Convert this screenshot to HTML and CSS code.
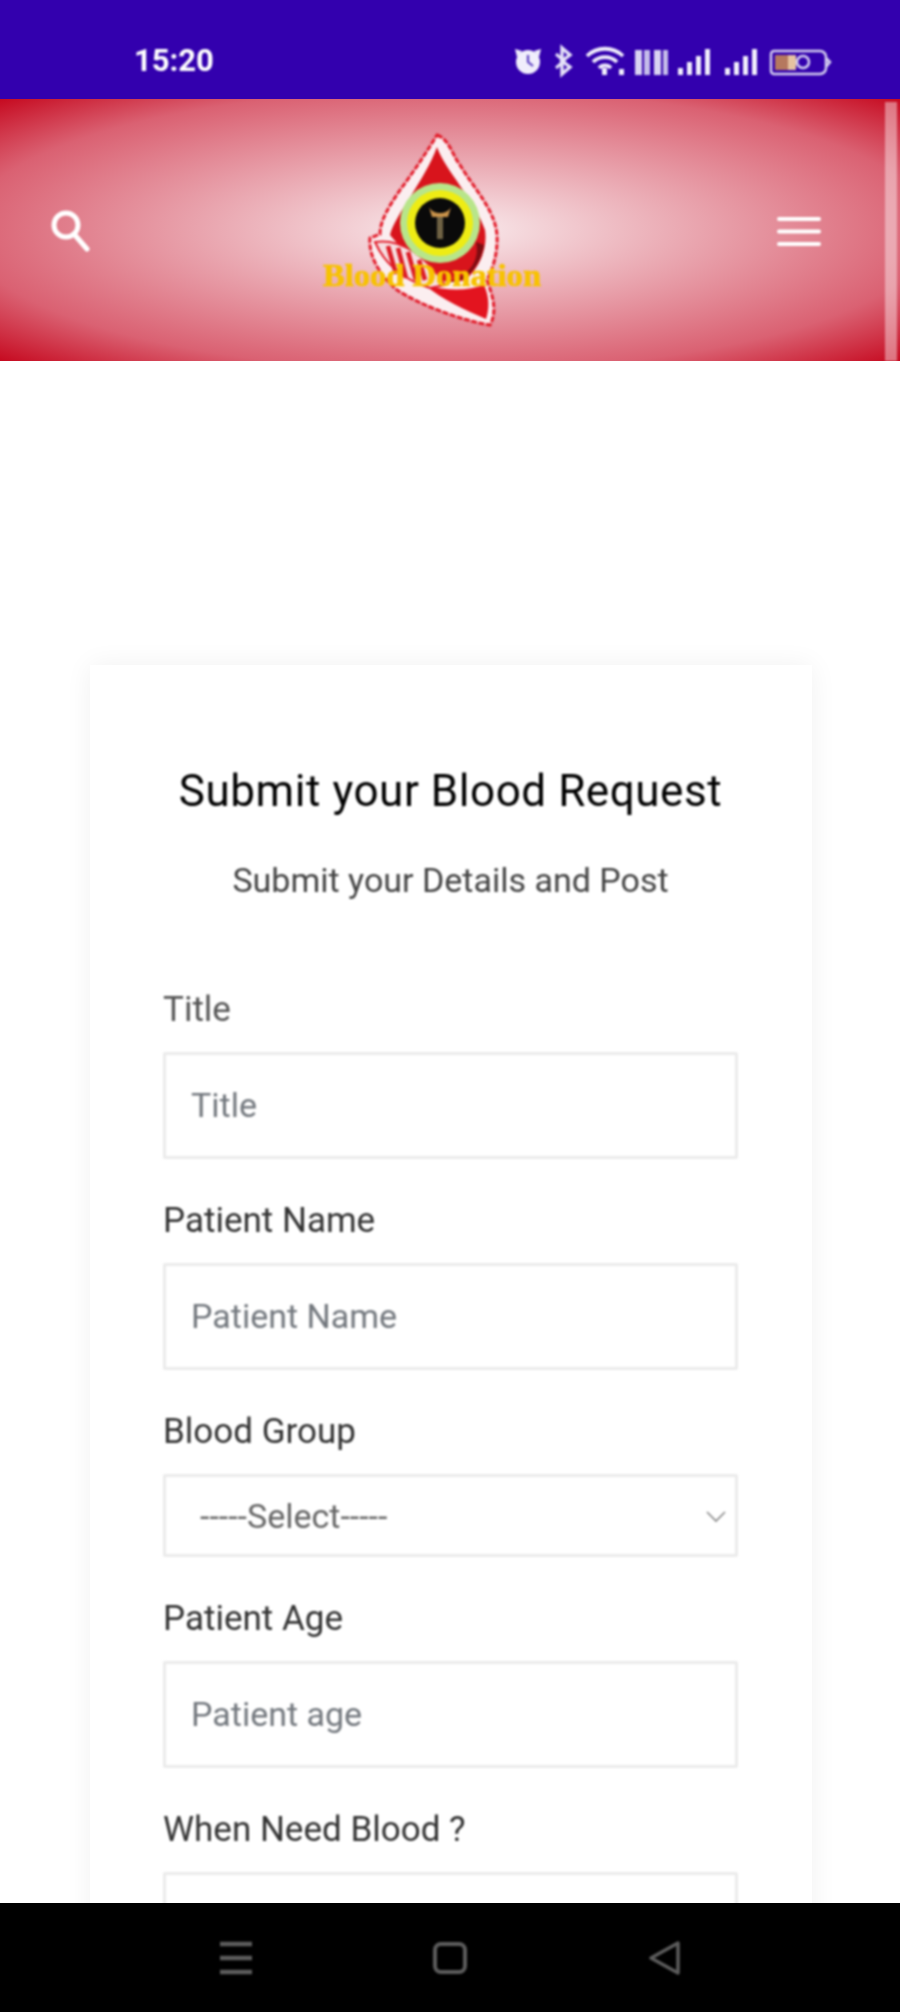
FILE: index.html
```html
<!DOCTYPE html>
<html lang="en">
<head>
<meta charset="utf-8">
<title>Blood Donation</title>
<link rel="stylesheet" href="styles.css">
</head>
<body>
<div class="phone">
  <div class="status">
    <span class="time">15:20</span>
    <svg class="status-icons" width="330" height="36" viewBox="0 0 330 36">
      <g fill="#f1eefc">
        <circle cx="25" cy="20" r="12"/><path d="M12 7l7 2-5 6zM38 7l-7 2 5 6z"/>
        <path d="M25 13v7l5 4" fill="none" stroke="#5a3fc0" stroke-width="2.2"/>
        <path d="M59 6l0 26 8-7-8-6 8-6z" fill="none" stroke="#e6e2f8" stroke-width="3.4"/>
        <path d="M53 12l8 7-8 7" fill="none" stroke="#e6e2f8" stroke-width="3"/>
        <path d="M84 14a26 26 0 0 1 36 0M90 20a17 17 0 0 1 24 0M96 26a8 8 0 0 1 12 0" fill="none" stroke="#f1eefc" stroke-width="3.8"/>
        <rect x="99" y="26" width="5" height="7"/><rect x="116" y="27" width="5" height="6"/>
        <rect x="132" y="8" width="7" height="25" fill="#d9d3f2"/><rect x="141" y="8" width="6" height="25" fill="#c4bcea"/>
        <rect x="151" y="8" width="7" height="25" fill="#d9d3f2"/><rect x="160" y="8" width="5" height="25" fill="#c4bcea"/>
        <rect x="175" y="26" width="5" height="7"/><rect x="184" y="20" width="5" height="13"/><rect x="193" y="14" width="5" height="19"/><rect x="202" y="7" width="5" height="26"/>
        <rect x="222" y="26" width="5" height="7"/><rect x="231" y="20" width="5" height="13"/><rect x="240" y="14" width="5" height="19"/><rect x="249" y="7" width="5" height="26"/>
      </g>
      <path d="M271 9h46a6 6 0 0 1 6 6v11a6 6 0 0 1-6 6h-46a3 3 0 0 1-3-3v-17a3 3 0 0 1 3-3zM323 16l4 4-4 5" fill="none" stroke="#d5cff0" stroke-width="2.5"/>
      <rect x="272" y="13" width="13" height="15" fill="#b5785f"/>
      <rect x="285" y="13" width="8" height="15" fill="#e6c3a0"/>
      <circle cx="300" cy="20" r="6" fill="none" stroke="#d5cff0" stroke-width="2.5"/>
    </svg>
  </div>
  <header class="topbar">
    <svg class="search" width="46" height="46" viewBox="0 0 46 46">
      <circle cx="18" cy="17" r="12" fill="none" stroke="#fff" stroke-width="5"/>
      <path d="M26 26l13 15" stroke="#fff" stroke-width="5" stroke-linecap="round"/>
    </svg>
    <svg class="logo" width="260" height="220" viewBox="0 0 260 220">
      <path d="M137 15C150 20 152 35 160 45C175 70 195 90 197 115C198 135 192 150 187 160C192 175 198 190 190 205C160 200 120 185 97 170C85 160 68 140 70 118L80 114C80 100 90 85 100 70C115 50 128 30 137 15Z" fill="#fbeef0" stroke="#e21d2b" stroke-width="3" stroke-dasharray="6 1.5"/>
      <path d="M137 27C145 50 175 80 185 110C188 130 178 150 165 160C150 165 130 160 120 150L90 115C95 95 125 60 137 27Z" fill="#d8141c"/>
      <path d="M176 122C180 140 170 155 150 162C165 162 180 148 184 125Z" fill="#7d0d12"/>
      <path d="M125 165C150 172 170 170 184 165C190 178 189 190 186 199C165 190 143 180 125 165Z" fill="#e3141f"/>
      <path d="M75 122C100 118 125 135 145 165L130 168C105 160 85 145 75 122Z" fill="#f6dfe1" stroke="#e21d2b" stroke-width="2"/>
      <path d="M88 126l8 28M98 128l8 30M108 132l8 28M119 140l6 20" stroke="#dc1a24" stroke-width="4.5" fill="none"/>
      <circle cx="140" cy="103" r="40" fill="#b8e58a"/>
      <circle cx="140" cy="103" r="33" fill="#eeec14"/>
      <circle cx="140" cy="103" r="25" fill="#0a0a0a"/>
      <path d="M129 87c4 8 18 8 22 0l-3 10h-16z" fill="#c9924a"/>
      <path d="M137 97h6v22h-6z" fill="#6f6244"/>
      <text x="132" y="166" class="logo-text" text-anchor="middle" textLength="218" lengthAdjust="spacingAndGlyphs">Blood Donation</text>
    </svg>
    <svg class="menu" width="44" height="32" viewBox="0 0 44 32">
      <path d="M2 4h40M2 16.500h40M2 29h40" stroke="#fff" stroke-width="4" stroke-linecap="round"/>
    </svg>
    <span class="scroll-thumb"></span>
  </header>
  <main class="content">
    <section class="card">
      <h1 class="card-title soft">Submit your Blood Request</h1>
      <p class="card-sub soft">Submit your Details and Post</p>
      <form class="form soft">
        <div class="group">
          <label class="label label-muted" for="f1">Title</label>
          <input class="field" id="f1" type="text" placeholder="Title">
        </div>
        <div class="group">
          <label class="label" for="f2">Patient Name</label>
          <input class="field" id="f2" type="text" placeholder="Patient Name">
        </div>
        <div class="group">
          <label class="label" for="f3">Blood Group</label>
          <div class="select-wrap">
            <select class="field field-select" id="f3"><option>-----Select-----</option></select>
            <svg class="chevron" width="24" height="14" viewBox="0 0 24 14"><path d="M3 3l9 9 9-9" fill="none" stroke="#888" stroke-width="1.6"/></svg>
          </div>
        </div>
        <div class="group">
          <label class="label" for="f4">Patient Age</label>
          <input class="field" id="f4" type="text" placeholder="Patient age">
        </div>
        <div class="group">
          <label class="label" for="f5">When Need Blood ?</label>
          <input class="field" id="f5" type="text">
        </div>
      </form>
    </section>
  </main>
  <nav class="navbar">
    <svg class="soft" width="32" height="34" viewBox="0 0 32 34"><path d="M0 3h32M0 17h32M0 31h32" stroke="#5c5c5c" stroke-width="4.5"/></svg>
    <svg class="soft" width="36" height="34" viewBox="0 0 36 34"><rect x="3" y="3" width="30" height="28" rx="6" fill="none" stroke="#5c5c5c" stroke-width="4"/></svg>
    <svg class="soft" width="34" height="36" viewBox="0 0 34 36"><path d="M30 3v30L3 18z" fill="none" stroke="#5c5c5c" stroke-width="3.5" stroke-linejoin="round"/></svg>
  </nav>
</div>
</body>
</html>
```

FILE: styles.css
```css
* { box-sizing: border-box; }
html, body { margin: 0; padding: 0; background: #fff; }
.phone {
  width: 900px;
  height: 2012px;
  display: flex;
  flex-direction: column;
  overflow: hidden;
  font-family: Roboto, "Liberation Sans", sans-serif;
}
.soft, .time, .status-icons, .search, .menu, .logo, .scroll-thumb { filter: blur(0.8px); }
.status {
  flex: 0 0 99px;
  background: #3300ae;
  display: flex;
  align-items: center;
  justify-content: space-between;
  padding: 22px 67px 0 134px;
  color: #fff;
}
.time { font-size: 31px; font-weight: 700; margin-top: -1px; }
.status-icons { margin-top: -2px; }
.topbar {
  flex: 0 0 262px;
  position: relative;
  display: flex;
  align-items: center;
  justify-content: space-between;
  padding: 0 79px 0 48px;
  background: radial-gradient(ellipse at center, #f9ecee 0%, #da6172 76%, #c60a20 100%);
}
.logo { position: absolute; left: 300px; top: 21px; filter: blur(1px); }
.logo-text { font: 700 32px "Liberation Serif", serif; fill: #f7c200; stroke: #f7c200; stroke-width: 0.7px; }
.search { margin-top: 2px; }
.menu { margin-top: 2px; }
.scroll-thumb {
  position: absolute;
  right: 3px;
  top: 3px;
  bottom: 0;
  width: 12px;
  background: rgba(255, 255, 255, 0.42);
}
.content { flex: 1; overflow: hidden; padding: 304px 88px 0 90px; }
.card {
  background: #fff;
  padding: 102px 74px 60px 73px;
  box-shadow: 0 0 26px rgba(0, 0, 0, 0.06);
}
.card-title {
  margin: 0;
  font-size: 44px;
  font-weight: 400;
  line-height: 48px;
  text-align: center;
  color: #000;
  letter-spacing: 0.55px;
  white-space: nowrap;
}
.card-sub {
  margin: 45px 0 0;
  font-size: 34px;
  line-height: 40px;
  text-align: center;
  color: #444;
}
.form { margin-top: 86px; }
.group { margin-bottom: 38px; }
.label {
  display: block;
  font-size: 35px;
  line-height: 44px;
  padding-top: 2px;
  height: 44px;
  margin-bottom: 22px;
  color: #333;
}
.label-muted { color: #555; }
.field {
  display: block;
  width: 100%;
  height: 107px;
  padding: 0 25px 2px;
  border: 3px solid #ebebeb;
  border-radius: 2px;
  background: #fff;
  font: 34px Roboto, "Liberation Sans", sans-serif;
  color: #666;
  outline: none;
}
.field::placeholder { color: #73787e; opacity: 1; }
.select-wrap { position: relative; }
.field-select {
  height: 83px;
  padding: 0 34px;
  appearance: none;
  -webkit-appearance: none;
}
.chevron { position: absolute; right: 10px; top: 35px; }
.navbar {
  flex: 0 0 109px;
  background: #000;
  display: flex;
  align-items: center;
  padding: 0 218px 0 220px;
  justify-content: space-between;
}
```
